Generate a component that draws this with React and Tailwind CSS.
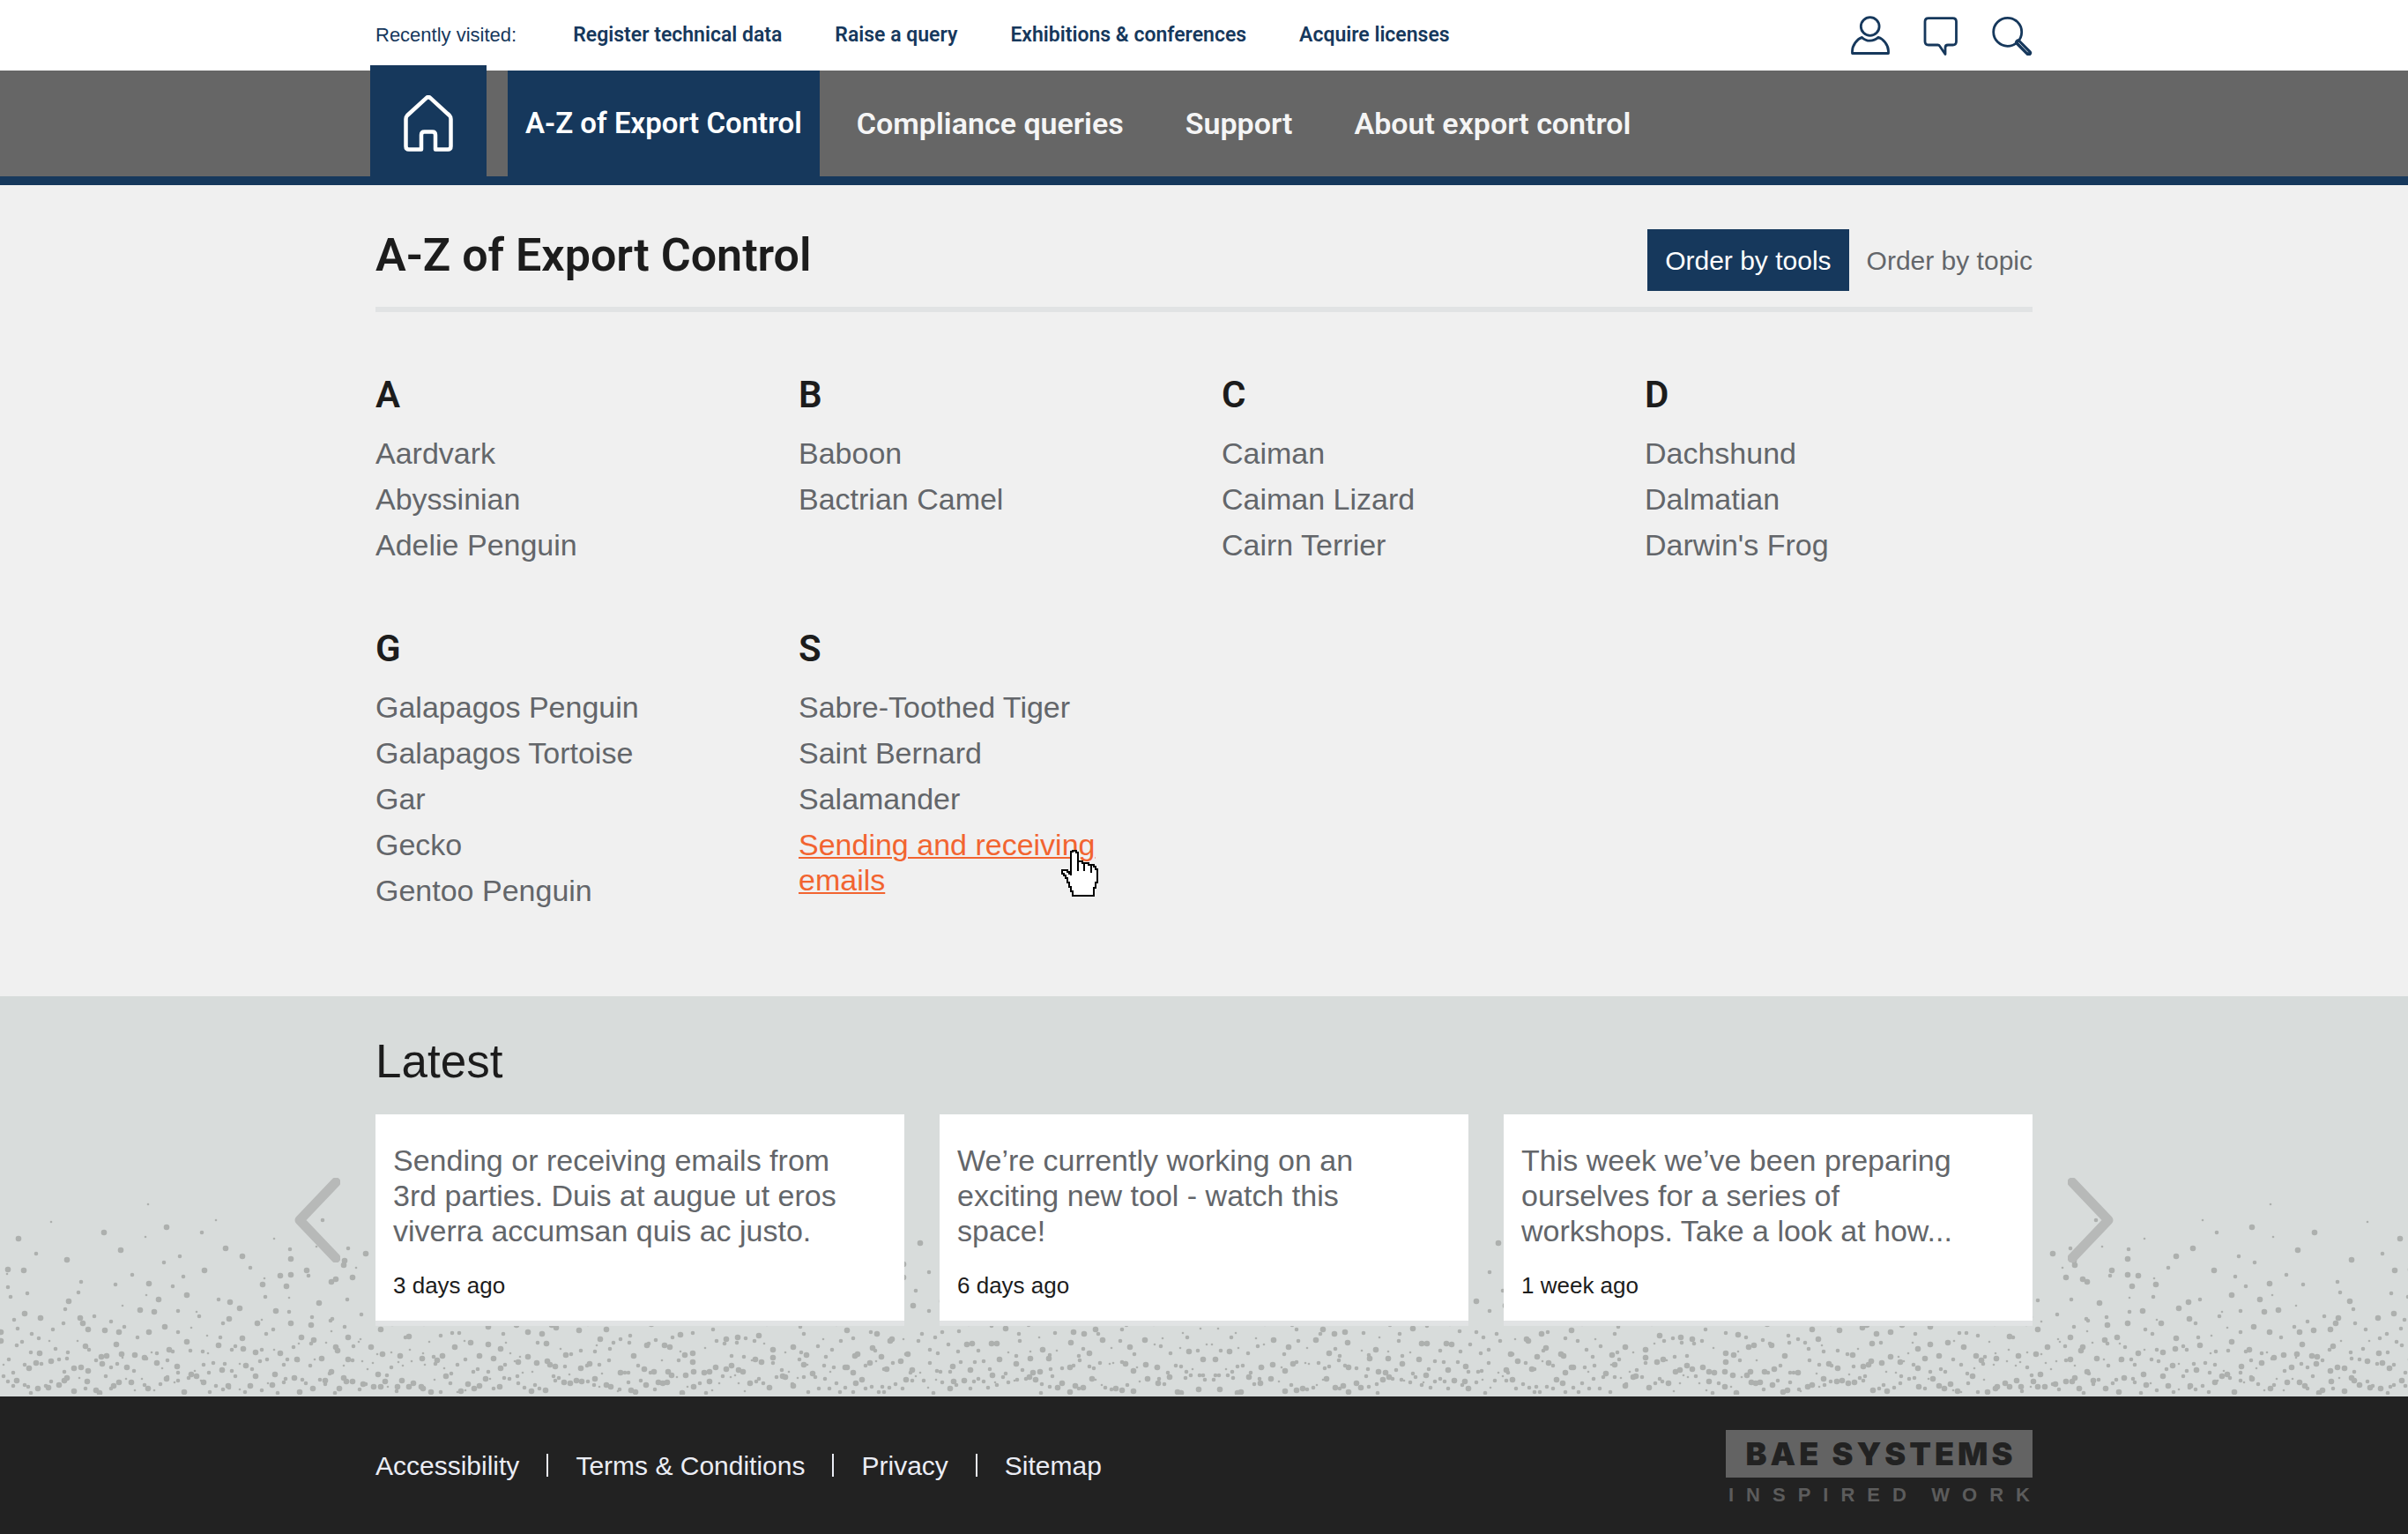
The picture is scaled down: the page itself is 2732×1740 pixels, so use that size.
import React from "react";

const recent = ["Register technical data", "Raise a query", "Exhibitions & conferences", "Acquire licenses"];
const navItems = ["Compliance queries", "Support", "About export control"];

const groups = [
  { letter: "A", items: ["Aardvark", "Abyssinian", "Adelie Penguin"] },
  { letter: "B", items: ["Baboon", "Bactrian Camel"] },
  { letter: "C", items: ["Caiman", "Caiman Lizard", "Cairn Terrier"] },
  { letter: "D", items: ["Dachshund", "Dalmatian", "Darwin's Frog"] },
  { letter: "G", items: ["Galapagos Penguin", "Galapagos Tortoise", "Gar", "Gecko", "Gentoo Penguin"] },
  { letter: "S", items: ["Sabre-Toothed Tiger", "Saint Bernard", "Salamander", "Sending and receiving emails"] },
];

const news = [
  { text: "Sending or receiving emails from 3rd parties. Duis at augue ut eros viverra accumsan quis ac justo.", when: "3 days ago" },
  { text: "We’re currently working on an exciting new tool - watch this space!", when: "6 days ago" },
  { text: "This week we’ve been preparing ourselves for a series of workshops. Take a look at how...", when: "1 week ago" },
];

const footerLinks = ["Accessibility", "Terms & Conditions", "Privacy", "Sitemap"];

/* Sparse upper dots at the outer edge: x, y, radius. */
const sparseDots = [
  [168, 6, 1], [58, 26, 1], [21, 45, 3], [118, 38, 3], [189, 32, 3], [165, 43, 1], [245, 24, 1], [229, 38, 2],
  [137, 58, 3], [41, 62, 2], [76, 69, 3], [204, 65, 2], [256, 56, 3], [186, 72, 2], [275, 65, 3], [311, 45, 1],
  [366, 24, 2], [359, 54, 1], [329, 57, 2], [330, 68, 3], [284, 78, 2], [232, 81, 3], [9, 80, 3], [8, 85, 1],
  [27, 81, 3], [150, 86, 2], [208, 88, 2], [391, 70, 3], [390, 75, 3], [395, 56, 2], [415, 62, 3], [404, 78, 1],
  [318, 87, 3], [330, 86, 3], [348, 81, 3], [350, 87, 2], [92, 94, 2], [131, 97, 2], [169, 96, 3], [298, 97, 3],
  [300, 90, 1], [325, 99, 3], [376, 94, 3], [381, 91, 3], [400, 89, 3], [9, 100, 2], [196, 99, 2],
];

/* Dots per 450 x 20 block, from the top band down to the bottom. */
const bands = [1, 3, 4, 7, 11, 16, 24, 32, 46, 60, 78];

function buildDots() {
  let seed = 20177;
  const rnd = () => {
    seed = (seed * 16807) % 2147483647;
    return seed / 2147483647;
  };
  const half = [...sparseDots];
  bands.forEach((count, band) => {
    const total = Math.round((count * 1372) / 450);
    for (let i = 0; i < total; i += 1) {
      const x = Math.round(((i + rnd()) * 1372) / total);
      const y = Math.round(band * 20 + rnd() * 20);
      const r = [1, 2, 2, 2, 3, 3, 3][Math.floor(rnd() * 7)];
      if (y >= 102 || x > 430) half.push([x, y, r]);
    }
  });
  return half.flatMap(([x, y, r]) => [[x, y, r], [2744 - x, y, r]]);
}

const dots = buildDots();

function DotField() {
  return (
    <svg className="absolute inset-x-0 bottom-[2px] h-[222px] w-full" viewBox="0 0 2744 222" preserveAspectRatio="xMinYMax slice" aria-hidden="true">
      {dots.map(([x, y, r], i) => (
        <circle key={i} cx={x} cy={y} r={r + 0.3} fill="#adb0ae" />
      ))}
    </svg>
  );
}

function HomeIcon() {
  return (
    <svg width="56" height="64" viewBox="0 0 56 64" fill="none" stroke="#fff" strokeWidth="4.5" strokeLinejoin="round" aria-hidden="true">
      <path d="M25.5 3.3 4 23Q2.5 24.5 2.5 27V58Q2.5 61.5 6 61.5H20V45Q20 41.5 23.5 41.5H32.5Q36 41.5 36 45V61.5H50Q53.5 61.5 53.5 58V27Q53.5 24.5 52 23L30.5 3.3Q28 1 25.5 3.3Z" />
    </svg>
  );
}

function UserIcon() {
  return (
    <svg width="46" height="46" viewBox="40 17 46 46" fill="none" stroke="#16385c" strokeWidth="2.8" strokeLinejoin="round" aria-hidden="true">
      <circle cx="61.7" cy="30" r="10.4" />
      <path d="M41.5 60.5H82.5V58C82.5 51 76.5 43.8 71 42.4C65.5 47.4 57.5 47.4 52.5 42.4C47 44 41.5 51.5 41.5 58Z" />
    </svg>
  );
}

function ChatIcon() {
  return (
    <svg width="46" height="46" viewBox="120 17 46 46" fill="none" stroke="#16385c" strokeWidth="2.8" strokeLinejoin="round" aria-hidden="true">
      <path d="M128 20.6H155.5Q159.5 20.6 159.5 24.6V47Q159.5 51 155.5 51H150Q147 51 147 54V61.5L140.5 52Q140 51 138.5 51H128Q124 51 124 47V24.6Q124 20.6 128 20.6Z" />
    </svg>
  );
}

function SearchIcon() {
  return (
    <svg width="46" height="46" viewBox="200 17 46 46" fill="none" stroke="#16385c" strokeLinecap="round" aria-hidden="true">
      <circle cx="217.7" cy="36.3" r="16" strokeWidth="2.8" />
      <path d="M229.6 48 241.6 60" strokeWidth="7" />
      <path d="M230.5 48.5 240.6 59" stroke="#c8d0da" strokeWidth="1" />
    </svg>
  );
}

function HandCursor() {
  return (
    <svg className="pointer-events-none absolute left-[298px] top-[26px]" width="43" height="54" viewBox="0 0 43 54" shapeRendering="crispEdges" aria-hidden="true">
      <path
        d="M11 29V2H13V1H17V3H19V13H24V15H31V17H37V19H39V22H41V37H39V43H37V52H13V47H11V42H9V37H7V32H5V29H3V27H1V23H7V25H9V27H11Z"
        fill="#fff"
        stroke="#000"
        strokeWidth="2"
      />
      <path d="M19 13V24M26 15V24M34 17V26" fill="none" stroke="#000" strokeWidth="2" />
    </svg>
  );
}

function Chevron({ label, d }) {
  return (
    <button type="button" aria-label={label} className="shrink-0">
      <svg width="52" height="96" viewBox="0 0 52 96" fill="none" stroke="#b7b9b8" strokeWidth="11" strokeLinecap="round" strokeLinejoin="round">
        <path d={d} />
      </svg>
    </button>
  );
}

export default function App() {
  return (
    <div className="flex min-h-screen flex-col bg-[#f0f0f0] font-['Liberation_Sans',Arial,sans-serif] text-[#63666a]">
      <header>
        <div className="bg-white text-[#16385c]">
          <div className="mx-auto flex h-20 w-full max-w-[1880px] items-center justify-between">
            <div className="flex items-baseline gap-16 text-[22px]">
              <span>Recently visited:</span>
              <div className="flex items-baseline gap-[60px]">
                {recent.map((r) => (
                  <a key={r} href="#" className="font-['Roboto',sans-serif] text-[23px] font-semibold">{r}</a>
                ))}
              </div>
            </div>
            <div className="flex items-center gap-[34px]">
              <button type="button" aria-label="Account"><UserIcon /></button>
              <button type="button" aria-label="Messages"><ChatIcon /></button>
              <button type="button" aria-label="Search"><SearchIcon /></button>
            </div>
          </div>
        </div>
        <div className="border-b-[10px] border-[#16385c] bg-[#666666]">
          <nav className="mx-auto flex h-[120px] w-full max-w-[1880px] font-['Roboto',sans-serif] text-[34px] font-semibold text-[#f5f5f5]">
            <a href="#" aria-label="Home" className="-ml-1.5 -mt-1.5 flex w-[132px] items-center justify-center bg-[#16385c] pt-1.5">
              <HomeIcon />
            </a>
            <a href="#" aria-current="page" className="ml-6 flex items-center bg-[#16385c] px-5 text-[33px] text-white">A-Z of Export Control</a>
            <div className="ml-[42px] flex items-center gap-[70px]">
              {navItems.map((n) => (
                <a key={n} href="#">{n}</a>
              ))}
            </div>
          </nav>
        </div>
      </header>

      <main className="mx-auto w-full max-w-[1880px] grow pb-[100px] pt-[50px]">
        <div className="flex items-start justify-between border-b-[6px] border-[#e1e3e4] pb-[18px]">
          <h1 className="font-['Roboto',sans-serif] text-[52px] font-semibold leading-[60px] text-[#1c1c1c]">A-Z of Export Control</h1>
          <div className="flex h-[70px] items-stretch text-[30px]">
            <button type="button" aria-pressed="true" className="bg-[#16385c] px-5 text-white">Order by tools</button>
            <button type="button" aria-pressed="false" className="pl-5">Order by topic</button>
          </div>
        </div>
        <div className="mt-[70px] grid grid-cols-4 gap-x-10 gap-y-[74px]">
          {groups.map((g) => (
            <section key={g.letter}>
              <h2 className="font-['Roboto',sans-serif] text-[42px] font-semibold leading-[48px] text-[#1c1c1c]">{g.letter}</h2>
              <ul className="mt-[22px] flex flex-col gap-3 pr-10 text-[34px] leading-[40px]">
                {g.items.map((item) =>
                  item.startsWith("Sending") ? (
                    <li key={item} className="relative">
                      <a href="#" className="text-[#f26430] underline decoration-2 underline-offset-2">{item}</a>
                      <HandCursor />
                    </li>
                  ) : (
                    <li key={item}><a href="#">{item}</a></li>
                  )
                )}
              </ul>
            </section>
          ))}
        </div>
      </main>

      <section className="relative bg-[#d8dcdb] pb-20 pt-11">
        <DotField />
        <div className="relative">
          <h2 className="mx-auto w-full max-w-[1880px] text-[53px] leading-[60px] text-[#1c1c1c]">Latest</h2>
          <div className="mx-auto mt-[30px] flex w-full max-w-[2064px] items-center gap-10">
            <Chevron label="Previous" d="M47 5 6 48 47 91" />
            <div className="grid grow grid-cols-3 gap-10">
              {news.map((n) => (
                <article key={n.when} className="border-b-[6px] border-[#e1e3e4] bg-white pb-6 pl-5 pr-10 pt-8">
                  <p className="text-[34px] leading-[40px]">{n.text}</p>
                  <p className="mt-[26px] text-[26px] leading-[32px] text-[#1c1c1c]">{n.when}</p>
                </article>
              ))}
            </div>
            <Chevron label="Next" d="M5 5 46 48 5 91" />
          </div>
        </div>
      </section>

      <footer className="bg-[#222222]">
        <div className="mx-auto flex h-[156px] w-full max-w-[1880px] items-center justify-between">
          <ul className="flex items-center text-[30px] text-[#ebedf5]">
            {footerLinks.map((f, i) => (
              <li key={f} className="flex items-center">
                {i > 0 && <span className="mx-[31px] h-[26px] w-[2px] bg-[#ebedf5]" />}
                <a href="#">{f}</a>
              </li>
            ))}
          </ul>
          <a href="#" className="w-[348px] pt-1.5 text-center">
            <span className="block bg-[#636363] pl-1 font-['Inter',sans-serif] text-[36px] font-black leading-[54px] tracking-[4px] text-[#222222]">BAE SYSTEMS</span>
            <span className="mt-2 flex justify-between px-[3px] text-[22px] font-bold leading-[24px] text-[#5c5c5c]">
              <span className="tracking-[14px]">INSPIRED</span>
              <span className="-mr-[14px] tracking-[14px]">WORK</span>
            </span>
          </a>
        </div>
      </footer>
    </div>
  );
}
